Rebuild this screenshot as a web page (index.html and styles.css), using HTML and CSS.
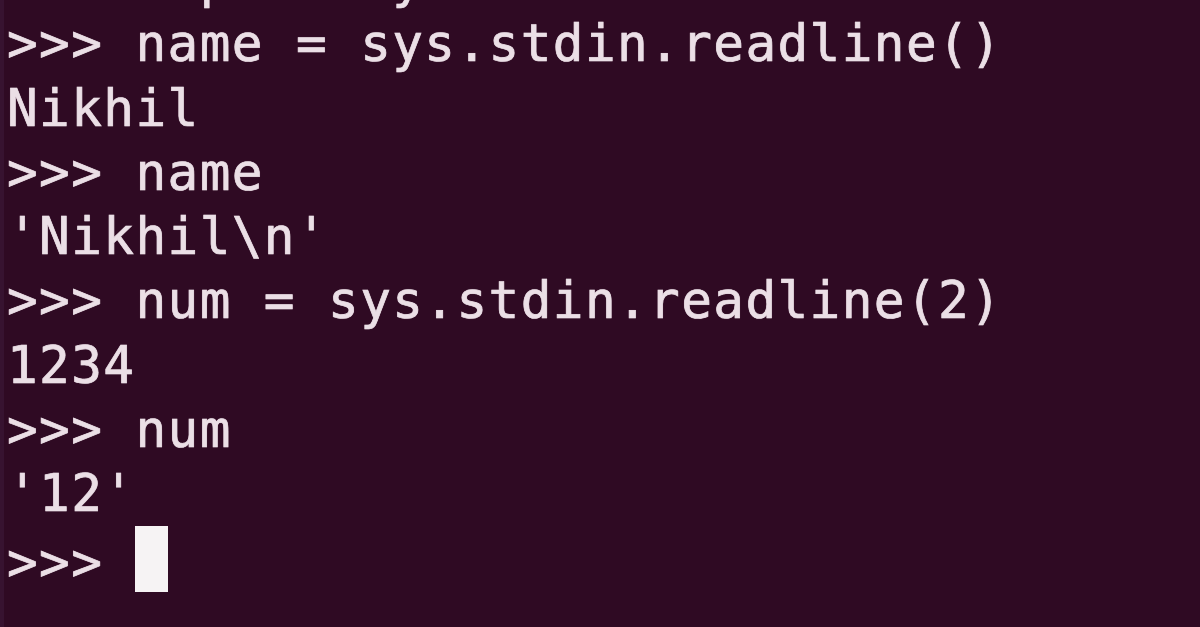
FILE: index.html
```html
<!DOCTYPE html>
<html>
<head>
<meta charset="utf-8">
<title>Terminal</title>
<link rel="stylesheet" href="styles.css">
</head>
<body>
<div class="screen">
  <div class="term">
    <div class="line">&gt;&gt;&gt; import sys</div>
    <div class="line">&gt;&gt;&gt; name = sys.stdin.readline()</div>
    <div class="line">Nikhil</div>
    <div class="line">&gt;&gt;&gt; name</div>
    <div class="line">'Nikhil\n'</div>
    <div class="line">&gt;&gt;&gt; num = sys.stdin.readline(2)</div>
    <div class="line">1234</div>
    <div class="line">&gt;&gt;&gt; num</div>
    <div class="line">'12'</div>
    <div class="line">&gt;&gt;&gt; <span class="cursor"></span></div>
  </div>
</div>
</body>
</html>
```

FILE: styles.css
```css
html, body {
  margin: 0;
  padding: 0;
  width: 1200px;
  height: 627px;
  overflow: hidden;
  background: #2f0a23;
}

.screen {
  height: 627px;
  border-left: 4px solid #371330;
  box-sizing: border-box;
  overflow: hidden;
}

.term {
  margin-top: -52px;
  padding-left: 3px;
  font-family: "DejaVu Sans Mono", monospace;
  font-size: 51px;
  letter-spacing: 1.4px;
  line-height: 64.25px;
  color: #ebdfe6;
  -webkit-text-stroke: 0.7px #ebdfe6;
  text-shadow: 0 0 1px rgba(235, 223, 230, 0.5);
}

.line {
  white-space: pre;
  height: 64.25px;
}

.cursor {
  display: inline-block;
  width: 33px;
  height: 66px;
  background: #f6f3f4;
  vertical-align: -12px;
}
```
